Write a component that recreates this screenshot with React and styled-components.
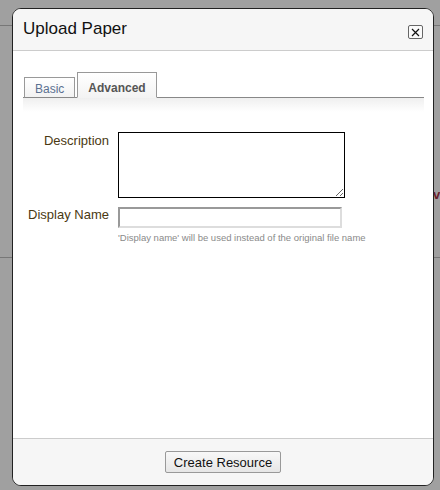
import React from 'react'
import styled, { createGlobalStyle } from 'styled-components'

const GlobalStyle = createGlobalStyle`
    html, body {
        margin: 0;
        padding: 0;
        background: #a0a0a0;
        font-family: "Liberation Sans", Arial, sans-serif;
    }
`

const Page = styled.div`
    position: relative;
    width: 440px;
    height: 490px;
    overflow: hidden;
    background: #a0a0a0;
`

const Rule = styled.div`
    height: 1px;
    background: #777;
    margin-top: ${p => p.top}px;
`

const PageText = styled.div`
    margin-top: 161px;
    padding-left: 433px;
    height: 16px;
    font-size: 13px;
    font-weight: bold;
    color: #6b1e2c;
    white-space: nowrap;
`

const Dialog = styled.div`
    position: absolute;
    left: 12px;
    top: 8px;
    width: 420px;
    height: 476px;
    border: 1px solid #222;
    border-radius: 9px;
    background: #fff;
    display: flex;
    flex-direction: column;
    overflow: hidden;
`

const Header = styled.div`
    height: 41px;
    display: flex;
    align-items: flex-start;
    justify-content: space-between;
    background: #f6f6f6;
    border-bottom: 1px solid #ccc;
    padding: 0 10px 0 10px;
`

const Title = styled.h1`
    margin: 10px 0 0 0;
    font-size: 17px;
    font-weight: normal;
    color: #111;
`

const Close = styled.button`
    margin-top: 16px;
    width: 15px;
    height: 14px;
    padding: 0;
    border: 1px solid #666;
    border-radius: 2px;
    background: #fafafa;
    display: flex;
    align-items: center;
    justify-content: center;
`

const Body = styled.div`
    flex: 1;
    padding: 20px 9px 0 10px;
`

const TabBar = styled.div`
    display: flex;
    align-items: flex-end;
    gap: 2px;
    padding-left: 1px;
    height: 26px;
    border-bottom: 1px solid #888;
`

const Tab = styled.div`
    height: ${p => (p.active ? 26 : 21)}px;
    padding: 0 10px;
    margin-bottom: -1px;
    border: 1px solid #999;
    border-bottom: ${p => (p.active ? '1px solid #f3f3f3' : '1px solid #888')};
    background: ${p => (p.active ? 'linear-gradient(#fff, #f3f3f3)' : 'linear-gradient(#fff, #f2f2f2)')};
    display: flex;
    align-items: center;
    box-sizing: border-box;
    font-size: 12px;
    font-weight: ${p => (p.active ? 'bold' : 'normal')};
    color: ${p => (p.active ? '#555' : '#5b7191')};
    padding-top: ${p => (p.active ? 6 : 2)}px;
`

const Shade = styled.div`
    height: 14px;
    background: linear-gradient(#efefef, #fff);
`

const Form = styled.div`
    display: grid;
    grid-template-columns: 86px 1fr;
    column-gap: 9px;
    row-gap: 9px;
    margin-top: 20px;
`

const Label = styled.label`
    text-align: right;
    font-size: 13px;
    line-height: 13px;
    color: #4a3912;
    padding-top: ${p => p.pad}px;
    white-space: nowrap;
`

const TextArea = styled.textarea`
    width: 223px;
    height: 62px;
    margin: 0;
    padding: 1px;
    border: 1px solid #000;
    font-family: inherit;
    display: block;
`

const Field = styled.div`
    display: flex;
    flex-direction: column;
`

const Input = styled.input`
    box-sizing: border-box;
    width: 224px;
    height: 21px;
    margin: 0;
    border: 2px solid;
    border-color: #999 #ddd #ddd #999;
    display: block;
`

const Help = styled.div`
    margin-top: 4px;
    font-size: 9.5px;
    color: #8a8a8a;
    white-space: nowrap;
`

const Footer = styled.div`
    height: 46px;
    background: #f6f6f6;
    border-top: 1px solid #ccc;
    display: flex;
    justify-content: center;
    align-items: flex-start;
`

const Button = styled.button`
    margin-top: 12px;
    height: 22px;
    width: 116px;
    padding: 0;
    border: 1px solid #999;
    border-radius: 2px;
    background: linear-gradient(#f8f8f8, #e6e6e6);
    font-family: inherit;
    font-size: 13px;
    color: #111;
`

export default function App() {
    return (
        <Page>
            <GlobalStyle />
            <Rule top={25} />
            <PageText>vi</PageText>
            <Rule top={54} />
            <Dialog>
                <Header>
                    <Title>Upload Paper</Title>
                    <Close aria-label="close">
                        <svg width="9" height="9" viewBox="0 0 9 9">
                            <path d="M1 1L8 8M8 1L1 8" stroke="#111" strokeWidth="1.2" />
                        </svg>
                    </Close>
                </Header>
                <Body>
                    <TabBar>
                        <Tab>Basic</Tab>
                        <Tab active>Advanced</Tab>
                    </TabBar>
                    <Shade />
                    <Form>
                        <Label pad={2}>Description</Label>
                        <TextArea />
                        <Label pad={1}>Display Name</Label>
                        <Field>
                            <Input type="text" />
                            <Help>'Display name' will be used instead of the original file name</Help>
                        </Field>
                    </Form>
                </Body>
                <Footer>
                    <Button>Create Resource</Button>
                </Footer>
            </Dialog>
        </Page>
    )
}
